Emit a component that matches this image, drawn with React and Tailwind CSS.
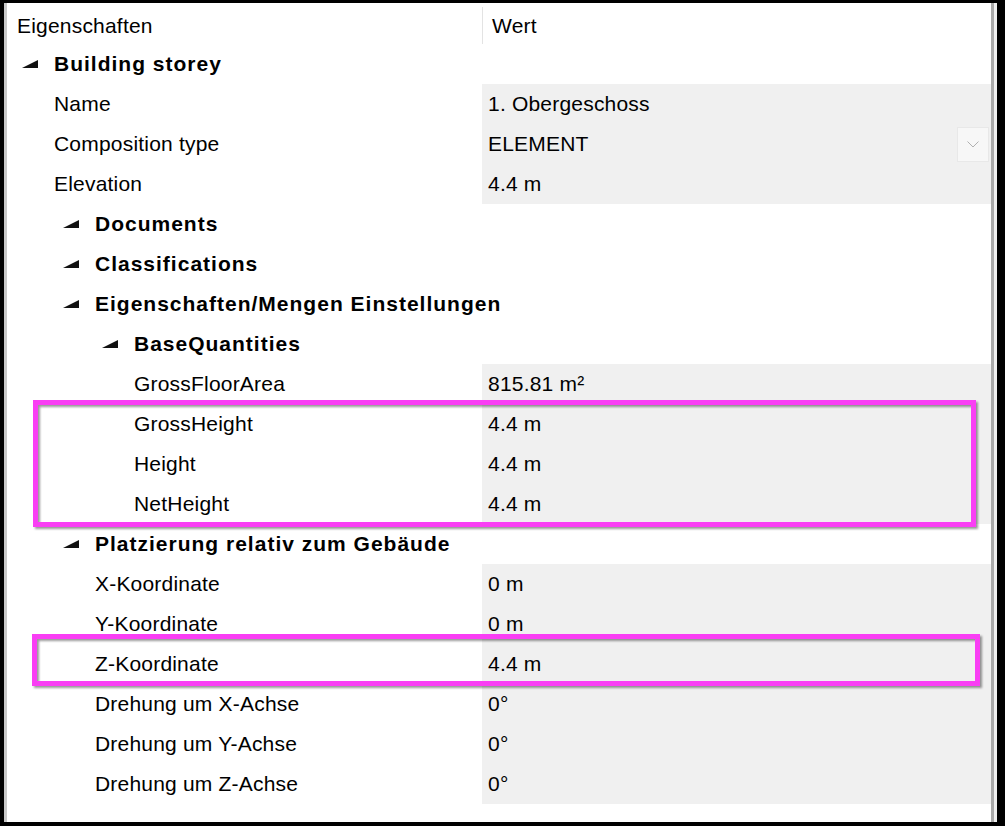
import React from 'react';

const rows = [
  { label: 'Building storey', group: true, x: 47 },
  { label: 'Name', value: '1. Obergeschoss', x: 47 },
  { label: 'Composition type', value: 'ELEMENT', x: 47, combo: true },
  { label: 'Elevation', value: '4.4 m', x: 47 },
  { label: 'Documents', group: true, x: 88 },
  { label: 'Classifications', group: true, x: 88 },
  { label: 'Eigenschaften/Mengen Einstellungen', group: true, x: 88 },
  { label: 'BaseQuantities', group: true, x: 127 },
  { label: 'GrossFloorArea', value: '815.81 m²', x: 127 },
  { label: 'GrossHeight', value: '4.4 m', x: 127 },
  { label: 'Height', value: '4.4 m', x: 127 },
  { label: 'NetHeight', value: '4.4 m', x: 127 },
  { label: 'Platzierung relativ zum Gebäude', group: true, x: 88 },
  { label: 'X-Koordinate', value: '0 m', x: 88 },
  { label: 'Y-Koordinate', value: '0 m', x: 88 },
  { label: 'Z-Koordinate', value: '4.4 m', x: 88 },
  { label: 'Drehung um X-Achse', value: '0°', x: 88 },
  { label: 'Drehung um Y-Achse', value: '0°', x: 88 },
  { label: 'Drehung um Z-Achse', value: '0°', x: 88 },
];

const Expander = () => (
  <svg width="16" height="8" viewBox="0 0 16 8" className="shrink-0">
    <polygon points="0,8 16,8 16,0" fill="#111" />
  </svg>
);

const Row = ({ row }) => {
  if (row.group) {
    return (
      <div className="flex h-[40px] items-center">
        <div className="flex items-center" style={{ paddingLeft: row.x - 32 }}>
          <Expander />
          <span className="ml-[16px] font-bold tracking-[1px] whitespace-nowrap">{row.label}</span>
        </div>
      </div>
    );
  }
  return (
    <div className="flex h-[40px]">
      <div className="w-[475px] flex items-center shrink-0" style={{ paddingLeft: row.x }}>
        <span className="whitespace-nowrap">{row.label}</span>
      </div>
      <div className="flex-1 flex items-center justify-between bg-[#f0f0f0] pl-[6px]">
        <span className="whitespace-nowrap">{row.value}</span>
        {row.combo && (
          <div className="mr-[2px] flex h-[35px] w-[32px] items-center justify-center border border-[#e8e8e8] bg-[#f7f7f7]">
            <svg width="12" height="7" viewBox="0 0 12 7">
              <path d="M0.5 0.5 L6 6 L11.5 0.5" fill="none" stroke="#b0b0b0" strokeWidth="1" />
            </svg>
          </div>
        )}
      </div>
    </div>
  );
};

export default function App() {
  return (
    <div className="w-[1005px] h-[826px] bg-black pt-[3px] pl-[4px] pr-[8px] pb-[4px] font-['Liberation_Sans',Arial,sans-serif] text-[21px] tracking-[0.2px] text-black">
      <div className="relative flex h-full bg-white">
        <div className="flex flex-1 flex-col border-l-[3px] border-[#c8c8c8]">
          <div className="flex h-[41px]">
            <div className="w-[475px] shrink-0 flex items-center pl-[10px] pt-[4px]">Eigenschaften</div>
            <div className="mt-[4px] flex flex-1 items-center border-l border-[#e3e3e3] pl-[9px]">Wert</div>
          </div>
          {rows.map((r) => (
            <Row key={r.label} row={r} />
          ))}
        </div>
        <div className="w-[6px] border-l-[3px] border-[#a9a9a9] bg-[#f0f0f0]" />

        <div className="absolute left-[29px] top-[397px] h-[127px] w-[943px] border-[5px] border-[#f93ef4] drop-shadow-[2px_2px_1px_rgba(0,0,0,0.4)]" />
        <div className="absolute left-[28px] top-[631px] h-[52px] w-[948px] border-[5px] border-[#f93ef4] drop-shadow-[2px_2px_1px_rgba(0,0,0,0.4)]" />
      </div>
    </div>
  );
}
